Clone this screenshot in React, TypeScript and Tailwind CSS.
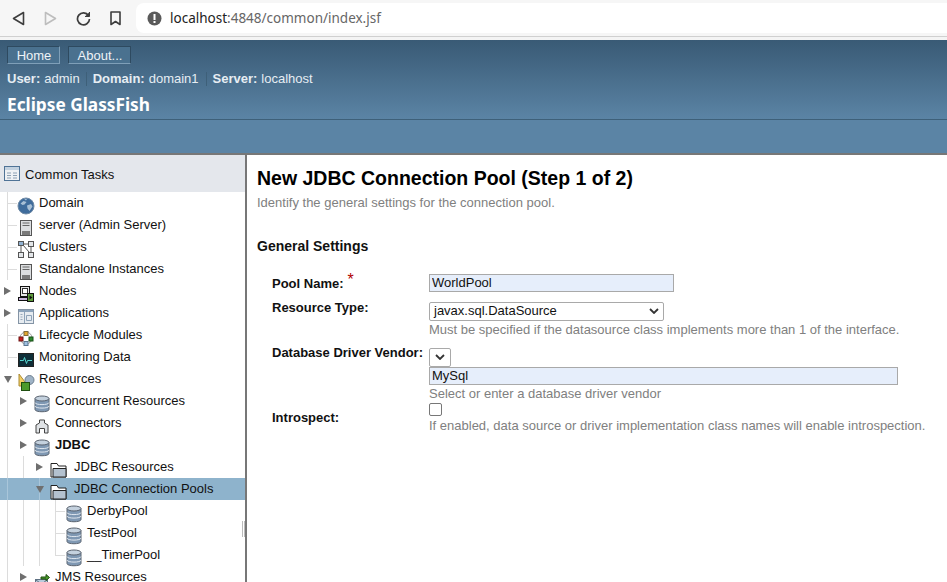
import { ReactNode } from "react";

const sans = "font-['Liberation_Sans',Arial,sans-serif]";

type IconName = "globe" | "server" | "clusters" | "nodes" | "apps" | "lifecycle" | "monitor" | "resources" | "db" | "connector" | "folder" | "jms";

function TreeIcon({ name }: { name: IconName }) {
  if (name === "globe") {
    return (
      <svg width="18" height="18" viewBox="0 0 18 18">
        <circle cx="9" cy="9" r="8" fill="#3f6c9c" stroke="#6f8aa5" />
        <path d="M3.500 6.500l3-2.500 3 1-2 2.500-2 .5zM10 8.500l4-1.500 1.500 2.500-3 4.500-2-2.500zM7 1.800l3 .2-1 1.500z" fill="#a9c0d6" />
      </svg>
    );
  }
  if (name === "server") {
    return (
      <svg width="18" height="18" viewBox="0 0 18 18">
        <rect x="3.500" y="1.500" width="11" height="15" fill="#dcdee0" stroke="#555" />
        <path d="M5.500 4h7M5.500 6.500h7" stroke="#666" />
        <rect x="5" y="12" width="8" height="4" fill="#7a7a7a" />
      </svg>
    );
  }
  if (name === "clusters") {
    return (
      <svg width="18" height="18" viewBox="0 0 18 18" fill="#e4e7ea" stroke="#555">
        <rect x="1.500" y="0.500" width="5" height="4" fill="#8fb0d0" />
        <rect x="11.500" y="0.500" width="5" height="5" />
        <rect x="1.500" y="11.500" width="5" height="5" />
        <rect x="11.500" y="11.500" width="5" height="5" />
        <path d="M6.500 3h5M4 5v6M14 6v5M6 4l6 7" fill="none" />
      </svg>
    );
  }
  if (name === "nodes") {
    return (
      <svg width="18" height="18" viewBox="0 0 18 18">
        <rect x="3.500" y="1.500" width="9" height="10" fill="#e8e8e8" stroke="#111" />
        <rect x="5.500" y="3.500" width="5" height="5" fill="#fff" stroke="#333" />
        <rect x="1.500" y="12.500" width="10" height="3" fill="#c9b7dd" stroke="#111" />
        <rect x="10.500" y="8.500" width="6" height="8" fill="#5d9a3c" stroke="#111" />
        <path d="M12.500 10.500l3 2-3 2z" fill="#111" />
      </svg>
    );
  }
  if (name === "apps") {
    return (
      <svg width="18" height="18" viewBox="0 0 18 18">
        <rect x="1.500" y="2.500" width="15" height="14" fill="#e6ebf0" stroke="#8494a5" />
        <rect x="2" y="3" width="14" height="2" fill="#8ba3bb" />
        <path d="M7.500 5v11M9.500 8.500h5v5h-5z" fill="none" stroke="#8ea3b8" />
        <path d="M3.500 7.500h2M3.500 10h2M3.500 12.500h2" stroke="#9aaabb" />
      </svg>
    );
  }
  if (name === "lifecycle") {
    return (
      <svg width="18" height="18" viewBox="0 0 18 18">
        <circle cx="9" cy="9" r="6" fill="none" stroke="#9a9a9a" />
        <rect x="7" y="2.500" width="4" height="4" fill="#e3a82f" stroke="#7d6a3a" />
        <rect x="2" y="8" width="4" height="4" fill="#c81e1e" stroke="#6d1414" />
        <rect x="12" y="8" width="4" height="4" fill="#2f8a2f" stroke="#174f17" />
        <rect x="7" y="12.500" width="4" height="4" fill="#9fc0e0" stroke="#5c7690" />
      </svg>
    );
  }
  if (name === "monitor") {
    return (
      <svg width="18" height="18" viewBox="0 0 18 18">
        <rect x="1.500" y="2.500" width="15" height="13" fill="#0f2e38" stroke="#222" />
        <path d="M3 9.500h3.500l1-3 2 6 1-3H15" fill="none" stroke="#57d6cf" />
      </svg>
    );
  }
  if (name === "resources") {
    return (
      <svg width="18" height="18" viewBox="0 0 18 18">
        <path d="M2 1v12h9z" fill="#f4cf63" stroke="#a98a35" />
        <circle cx="12.500" cy="7" r="4.500" fill="#9fb3c6" stroke="#6d7f90" />
        <rect x="4.500" y="9.500" width="8" height="8" fill="#4b9a2c" stroke="#1f4f10" />
      </svg>
    );
  }
  if (name === "db") {
    return (
      <svg width="16" height="18" viewBox="0 0 16 18">
        <path d="M1 3.500v11c0 3 14 3 14 0v-11z" fill="#7f98b3" stroke="#5b6470" />
        <ellipse cx="8" cy="3.500" rx="7" ry="2.500" fill="#c4d1de" stroke="#5b6470" />
        <path d="M1 7.500c0 2.800 14 2.800 14 0M1 11c0 2.800 14 2.800 14 0" fill="none" stroke="#dfe6ee" />
      </svg>
    );
  }
  if (name === "connector") {
    return (
      <svg width="16" height="16" viewBox="0 0 16 16">
        <path d="M5.500 5V2h5v3l3.500 2v8h-3.500v-4.500h-5V15H2V7z" fill="#dfe2e5" stroke="#444" />
      </svg>
    );
  }
  if (name === "folder") {
    return (
      <svg width="17" height="16" viewBox="0 0 17 16">
        <path d="M1 15V1.500h6l1.500 2.500H16V15z" fill="#fff" stroke="#222" />
        <path d="M3 15V6.500h13V15z" fill="#b3c1cf" stroke="#222" />
      </svg>
    );
  }
  return (
    <svg width="16" height="16" viewBox="0 0 16 16">
      <rect x="1.500" y="7.500" width="12" height="8" fill="#b9cbdc" stroke="#5f7183" />
      <path d="M2 8l5.500 4L13 8" fill="none" stroke="#5f7183" />
      <path d="M7 5h5V2.500L15.500 5.500 12 8.500V7H7z" fill="#4b9a2c" stroke="#1f4f10" />
    </svg>
  );
}

function Caret({ open }: { open?: boolean }) {
  return (
    <svg width="8" height="8" viewBox="0 0 8 8" className="shrink-0">
      <path d={open ? "M0 1h8L4 8z" : "M0 0l7 4-7 4z"} fill="#6f6f6f" />
    </svg>
  );
}

function TreeRow({
  depth,
  icon,
  label,
  caret,
  open,
  bold,
  selected,
  guides = [],
  halfGuides = [],
}: {
  depth: number;
  icon: IconName;
  label: string;
  caret?: boolean;
  open?: boolean;
  bold?: boolean;
  selected?: boolean;
  guides?: number[];
  halfGuides?: number[];
}) {
  return (
    <div className={`relative flex h-[22px] items-center text-[13px] text-[#111] ${selected ? "bg-[#8eb3cc]" : ""}`}>
      {guides.map((x) => (
        <span key={x} className={`absolute bottom-0 top-0 w-px ${selected ? "bg-[#a9c6da]" : "bg-[#dcdcdc]"}`} style={{ left: x }} />
      ))}
      {halfGuides.map((x) => (
        <span key={x} className="absolute top-0 h-[11px] w-px bg-[#dcdcdc]" style={{ left: x }} />
      ))}
      {!caret && <span className="absolute top-[11px] h-px w-[10px] bg-[#dcdcdc]" style={{ left: depth - 9 }} />}
      <div className="relative flex shrink-0 items-center justify-end pr-[4px]" style={{ width: depth }}>
        {caret && <Caret open={open} />}
      </div>
      <div className="relative flex w-[20px] shrink-0 items-center justify-center pt-[6px]">
        <TreeIcon name={icon} />
      </div>
      <span className={`whitespace-nowrap ${icon === "folder" ? "ml-[6px]" : "ml-[3px]"} ${bold ? "font-bold" : ""}`}>{label}</span>
    </div>
  );
}

function Field({ label, extra, children, labelClass }: { label: string; extra?: ReactNode; children: ReactNode; labelClass?: string }) {
  return (
    <div className="flex">
      <div className={`w-[157px] shrink-0 whitespace-nowrap text-[13px] font-bold text-[#111] ${labelClass ?? ""}`}>
        {label}
        {extra}
      </div>
      <div className="min-w-0 flex-1">{children}</div>
    </div>
  );
}

export default function App() {
  return (
    <div className={`flex h-[582px] w-[947px] flex-col overflow-hidden bg-white ${sans}`}>
      {/* browser toolbar */}
      <div className="flex h-[37px] shrink-0 items-center border-b border-[#d0d0d0] bg-[#f6f6f6]">
        <div className="flex w-[136px] shrink-0 items-center gap-[19px] pl-[12px]">
          <svg width="13" height="15" viewBox="0 0 13 15" fill="none" stroke="#3d3d3d" strokeWidth="1.600" strokeLinejoin="round"><path d="M11.500 1.500v12L1.500 7.500z" /></svg>
          <svg width="13" height="15" viewBox="0 0 13 15" fill="none" stroke="#bdbdbd" strokeWidth="1.600" strokeLinejoin="round"><path d="M1.500 1.500v12l10-6z" /></svg>
          <svg width="15" height="15" viewBox="0 0 15 15" fill="none" stroke="#3d3d3d" strokeWidth="1.700"><path d="M12.500 4.500A6 6 0 1 0 13.500 8" /><path d="M13.500 1v4.500H9" fill="#3d3d3d" strokeWidth="1" /></svg>
          <svg width="11" height="15" viewBox="0 0 11 15" fill="none" stroke="#3d3d3d" strokeWidth="1.600" strokeLinejoin="round"><path d="M1 1h9v12.500l-4.500-3-4.500 3z" /></svg>
        </div>
        <div className="flex h-[30px] flex-1 items-center rounded-l-[8px] bg-white pl-[11px] font-['Noto_Sans',sans-serif] text-[13.5px]">
          <svg width="15" height="15" viewBox="0 0 15 15" className="mr-[8px]">
            <circle cx="7.500" cy="7.500" r="7" fill="#5a5a5a" />
            <rect x="6.500" y="3" width="2" height="6" fill="#fff" />
            <rect x="6.500" y="10" width="2" height="2" fill="#fff" />
          </svg>
          <span className="text-[#222]">localhost</span>
          <span className="text-[#666]">:4848/common/index.jsf</span>
        </div>
      </div>
      <div className="h-[3px] shrink-0 bg-[#f4f4f4]" />

      {/* masthead */}
      <div className="h-[115px] shrink-0 border-b-[2px] border-[#777] bg-[#5b84a5]">
        <div className="h-[80px] border-b border-[#3e6079] bg-gradient-to-b from-[#395a75] to-[#5b84a5] pl-[7px]">
          <div className="flex gap-[8px] pt-[6px]">
            <button className="h-[18px] w-[53px] border border-b-[#7f9fb8] border-l-[#2e4a60] border-r-[#7f9fb8] border-t-[#2e4a60] bg-[#4a718f] pl-[1px] text-[13px] leading-[15px] text-[#eef3f7]">Home</button>
            <button className="h-[18px] w-[63px] border border-b-[#7f9fb8] border-l-[#2e4a60] border-r-[#2e4a60] border-t-[#2e4a60] bg-[#4a718f] pl-[1px] text-[13px] leading-[15px] text-[#eef3f7]">About...</button>
          </div>
          <div className="mt-[7px] flex h-[15px] items-center text-[13px] text-[#e6edf3]">
            <b className="mr-[4px]">User:</b>admin
            <span className="mx-[6px] h-[14px] w-px bg-[#3e6079]" />
            <b className="mr-[4px]">Domain:</b>domain1
            <span className="ml-[7px] mr-[6px] h-[14px] w-px bg-[#3e6079]" />
            <b className="mr-[4px]">Server:</b>localhost
          </div>
          <div className="mt-[7px] font-['Noto_Sans',sans-serif] text-[17.250px] font-bold leading-[24px] text-white">Eclipse GlassFish</div>
        </div>
      </div>

      <div className="flex min-h-0 flex-1">
        {/* tree panel */}
        <div className="relative w-[247px] shrink-0 overflow-hidden border-r-[2px] border-[#777]">
          <div className="flex h-[37px] items-center bg-[#e4e7ec] pl-[4px] pt-[2px] text-[13px] text-[#111]">
            <svg width="17" height="16" viewBox="0 0 17 16" className="mr-[4px] -mt-[2px]">
              <rect x="0.500" y="0.500" width="15" height="14" fill="#eef1f4" stroke="#4f7396" />
              <rect x="1" y="1" width="14" height="3" fill="#c3d2e0" />
              <path d="M3 7h4M3 9.500h4M3 12h4M9 7h4M9 9.500h4M9 12h4" stroke="#8ca0b3" />
            </svg>
            Common Tasks
          </div>
          <TreeRow depth={16} icon="globe" label="Domain" guides={[7]} />
          <TreeRow depth={16} icon="server" label="server (Admin Server)" guides={[7]} />
          <TreeRow depth={16} icon="clusters" label="Clusters" guides={[7]} />
          <TreeRow depth={16} icon="server" label="Standalone Instances" guides={[7]} />
          <TreeRow depth={16} icon="nodes" label="Nodes" caret />
          <TreeRow depth={16} icon="apps" label="Applications" caret />
          <TreeRow depth={16} icon="lifecycle" label="Lifecycle Modules" guides={[7]} />
          <TreeRow depth={16} icon="monitor" label="Monitoring Data" guides={[7]} />
          <TreeRow depth={16} icon="resources" label="Resources" caret open />
          <TreeRow depth={32} icon="db" label="Concurrent Resources" caret guides={[7]} />
          <TreeRow depth={32} icon="connector" label="Connectors" caret guides={[7]} />
          <TreeRow depth={32} icon="db" label="JDBC" caret bold guides={[7]} />
          <TreeRow depth={48} icon="folder" label="JDBC Resources" caret guides={[7, 23]} />
          <TreeRow depth={48} icon="folder" label="JDBC Connection Pools" caret open selected guides={[7, 39]} />
          <TreeRow depth={64} icon="db" label="DerbyPool" guides={[7, 23, 39, 55]} />
          <TreeRow depth={64} icon="db" label="TestPool" guides={[7, 23, 39, 55]} />
          <TreeRow depth={64} icon="db" label="__TimerPool" guides={[7, 23, 39]} halfGuides={[55]} />
          <TreeRow depth={32} icon="jms" label="JMS Resources" caret guides={[7]} />
          {/* resize grip */}
          <div className="absolute right-0 top-[366px] flex h-[16px] gap-px">
            <span className="w-px bg-[#bbb]" />
            <span className="w-px bg-[#bbb]" />
          </div>
        </div>

        {/* form */}
        <div className="min-w-0 flex-1 pl-[10px]">
          <h1 className="mt-[12px] whitespace-nowrap text-[19.500px] font-bold leading-[23px] text-black">New JDBC Connection Pool (Step 1 of 2)</h1>
          <div className="mt-[5px] text-[13px] leading-[15px] text-[#808080]">Identify the general settings for the connection pool.</div>
          <div className="mt-[28px] text-[14px] font-bold leading-[16px] text-[#111]">General Settings</div>
          <div className="mt-[20px] flex flex-col pl-[15px]">
            <Field
              label="Pool Name:"
              extra={<span className="relative -top-[3px] ml-[4px] text-[16px] font-normal leading-[15px] text-[#b00000]">*</span>}
            >
              <input readOnly value="WorldPool" className="block h-[18px] w-[245px] border border-[#a9a9a9] bg-[#e6eefb] px-[2px] text-[13px] text-[#111] outline-none" />
            </Field>
            <Field label="Resource Type:" labelClass="pt-[4px]">
              <div className="mt-[8px] flex h-[19px] w-[235px] items-center justify-between rounded-[2px] border border-[#a9a9a9] bg-white pl-[4px] pr-[4px] text-[13px] text-[#111]">
                javax.sql.DataSource
                <svg width="10" height="6" viewBox="0 0 10 6" fill="none" stroke="#333" strokeWidth="1.800"><path d="M1 1l4 4 4-4" /></svg>
              </div>
              <div className="mt-[1px] whitespace-nowrap text-[13px] leading-[15px] text-[#808080]">Must be specified if the datasource class implements more than 1 of the interface.</div>
            </Field>
            <Field label="Database Driver Vendor:" labelClass="pt-[6px]">
              <div className="mt-[11px] flex h-[19px] w-[22px] items-center justify-center rounded-[2px] border border-[#a9a9a9] bg-white">
                <svg width="10" height="6" viewBox="0 0 10 6" fill="none" stroke="#333" strokeWidth="1.800"><path d="M1 1l4 4 4-4" /></svg>
              </div>
              <input readOnly value="MySql" className="block h-[18px] w-[469px] border border-[#a9a9a9] bg-[#e6eefb] px-[2px] text-[13px] text-[#111] outline-none" />
              <div className="mt-[1px] text-[13px] leading-[15px] text-[#808080]">Select or enter a database driver vendor</div>
            </Field>
            <Field label="Introspect:" labelClass="pt-[7px]">
              <div className="mt-[2px] h-[13px] w-[13px] rounded-[2px] border border-[#777] bg-white" />
              <div className="mt-[2px] whitespace-nowrap text-[13px] leading-[15px] text-[#808080]">If enabled, data source or driver implementation class names will enable introspection.</div>
            </Field>
          </div>
        </div>
      </div>
    </div>
  );
}
